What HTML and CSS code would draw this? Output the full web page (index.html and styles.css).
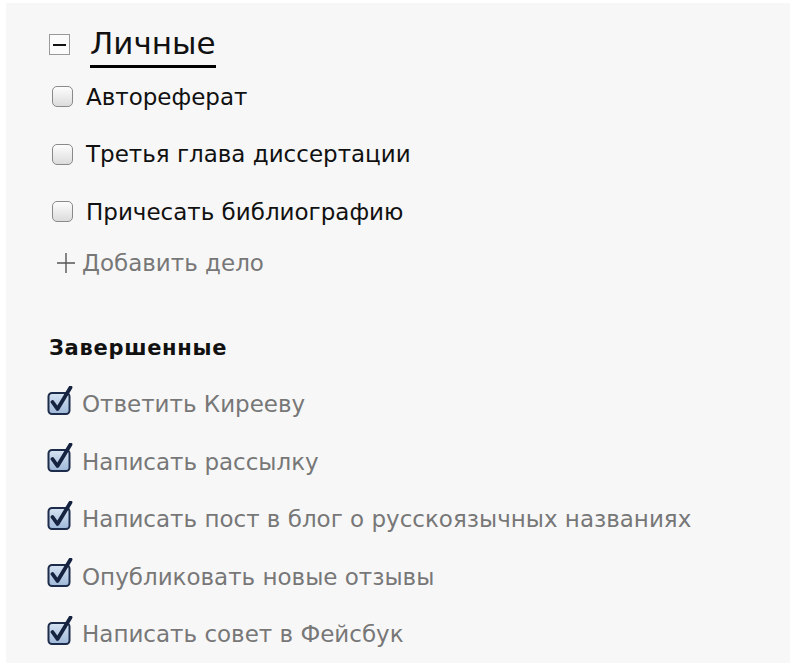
FILE: index.html
```html
<!DOCTYPE html>
<html lang="ru">
<head>
    <meta charset="UTF-8">
    <title>Дела</title>
    <link rel="stylesheet" href="styles.css">
</head>
<body>
    <div class="panel">
        <div class="list-head">
            <span class="collapse-btn"><span class="dash"></span></span>
            <h1 class="list-title">Личные</h1>
        </div>

        <ul class="tasks">
            <li class="task"><span class="box"></span>Автореферат</li>
            <li class="task"><span class="box"></span>Третья глава диссертации</li>
            <li class="task"><span class="box"></span>Причесать библиографию</li>
            <li class="task add-task">
                <svg class="plus" width="20" height="22" viewBox="0 0 20 22">
                    <path d="M1 11 H19 M10 1 V21" stroke="#555" stroke-width="1.4" fill="none"/>
                </svg>
                Добавить дело
            </li>
        </ul>

        <h2 class="done-title">Завершенные</h2>

        <ul class="tasks done">
            <li class="task"><svg class="tick"><use href="#tick"/></svg>Ответить Кирееву</li>
            <li class="task"><svg class="tick"><use href="#tick"/></svg>Написать рассылку</li>
            <li class="task"><svg class="tick"><use href="#tick"/></svg>Написать пост в блог о русскоязычных названиях</li>
            <li class="task"><svg class="tick"><use href="#tick"/></svg>Опубликовать новые отзывы</li>
            <li class="task"><svg class="tick"><use href="#tick"/></svg>Написать совет в Фейсбук</li>
        </ul>
    </div>

    <svg width="0" height="0" style="position:absolute">
        <defs>
            <linearGradient id="tickFill" x1="0" y1="0" x2="0" y2="1">
                <stop offset="0" stop-color="#d6e3f2"/>
                <stop offset="1" stop-color="#9fb8d8"/>
            </linearGradient>
            <symbol id="tick" viewBox="0 0 26 30">
                <rect x="1.5" y="7" width="21" height="21" rx="3.5" fill="url(#tickFill)" stroke="#1d2c4a" stroke-width="2"/>
                <path d="M5.5 16 L10.5 23 L23.5 1.5" stroke="#152340" stroke-width="3.8" fill="none" stroke-linecap="round" stroke-linejoin="round"/>
            </symbol>
        </defs>
    </svg>
</body>
</html>
```

FILE: styles.css
```css
body {
    margin: 0;
    background: #fff;
    font-family: "DejaVu Sans", Verdana, sans-serif;
    color: #111;
}

.panel {
    background: #f7f7f7;
    margin: 3px 12px 5px 6px;
    padding: 20px 0 5px 43px;
    height: 660px;
    box-sizing: border-box;
}

.list-head {
    display: flex;
    align-items: flex-start;
    gap: 20px;
}

.collapse-btn {
    width: 19px;
    height: 19px;
    margin-top: 11px;
    border: 1px solid #999;
    background: #fbfbfb;
    display: flex;
    align-items: center;
    justify-content: center;
}

.dash {
    width: 13px;
    height: 2px;
    background: #111;
}

.list-title {
    margin: 0;
    font-size: 31px;
    font-weight: normal;
    line-height: 40px;
    padding-bottom: 2px;
    border-bottom: 3px solid #000;
}

.tasks {
    list-style: none;
    margin: 0;
    padding: 0;
}

.task {
    height: 57.5px;
    display: flex;
    align-items: center;
    font-size: 23px;
}

.box {
    width: 21px;
    height: 21px;
    margin: 0 13px 0 3px;
    border: 1px solid #8a8a8a;
    border-radius: 5px;
    background: linear-gradient(#fdfdfd, #dcdcdc);
    box-sizing: border-box;
}

.add-task {
    color: #777;
    height: 44px;
}

.plus {
    margin: 0 6px 0 7px;
}

.done-title {
    margin: 51px 0 16px 0;
    font-size: 21px;
    letter-spacing: 0.7px;
    font-weight: bold;
}

.done .task {
    color: #777;
}

.tick {
    width: 26px;
    height: 30px;
    margin: -7px 9px 0 -2px;
}
```
